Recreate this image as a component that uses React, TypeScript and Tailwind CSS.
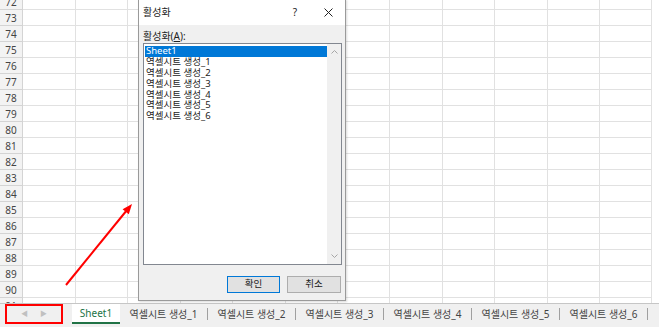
import React from 'react';

const FONT = '"Noto Sans", "Noto Sans CJK KR", sans-serif';

const rows = Array.from({length: 20}, (_, i) => 72 + i);
const cols = Array.from({length: 12}, (_, i) => i);
const sheets = ['역셀시트 생성_1', '역셀시트 생성_2', '역셀시트 생성_3', '역셀시트 생성_4', '역셀시트 생성_5', '역셀시트 생성_6'];
const items = ['Sheet1', ...sheets];

function Grid() {
  return (
    <div className="h-[303px] overflow-hidden bg-white">
      <div className="-mt-[6px]">
        {rows.map(r => (
          <div key={r} className="flex h-[16px]">
            <div className="flex w-[23px] shrink-0 items-center justify-center border-r border-b border-[#d4d4d4] bg-[#f3f3f3] text-[10px] leading-none text-[#444]">
              {r}
            </div>
            {cols.map(c => (
              <div key={c} className={`${c === 0 ? 'w-[53px]' : 'w-[52.4px]'} shrink-0 border-r border-b border-[#e1e1e1]`} />
            ))}
          </div>
        ))}
      </div>
    </div>
  );
}

function Dialog() {
  return (
    <div className="absolute left-[138px] top-[-1px] flex h-[302px] w-[208px] flex-col border border-[#9a9a9a] bg-[#f0f0f0] shadow-[1px_1px_2px_rgba(0,0,0,0.15)]">
      <div className="flex h-[25px] items-center bg-white pl-[4px] text-[10px] text-[#222]">
        <span>활성화</span>
        <span className="ml-auto mr-[27px] text-[10px]">?</span>
        <svg width="9" height="9" viewBox="0 0 9 9" className="mr-[12px]">
          <path d="M0.5 0.5 L8.5 8.5 M8.5 0.5 L0.5 8.5" stroke="#222" strokeWidth="1" />
        </svg>
      </div>
      <div className="flex flex-1 flex-col px-[4px]">
        <div className="mt-[5px] h-[12px] text-[10px] leading-[12px] text-[#222]">
          활성화(<span className="underline">A</span>):
        </div>
        <div className="mt-[1px] flex h-[222px] w-[199px] border border-[#828790] bg-white">
          <div className="flex-1 pl-[1px] pt-[2px]">
            {items.map((it, i) => (
              <div key={it}
                className={`h-[10.9px] pl-[1px] text-[9.5px] leading-[10.9px] ${i === 0 ? 'bg-[#0078d7] text-white' : 'text-[#222]'}`}>
                {it}
              </div>
            ))}
          </div>
          <div className="flex w-[14px] flex-col items-center justify-between bg-[#f0f0f0] py-[6px]">
            <svg width="7" height="4" viewBox="0 0 7 4"><path d="M0.5 3.5 L3.5 0.5 L6.5 3.5" fill="none" stroke="#a6a6a6" /></svg>
            <svg width="7" height="4" viewBox="0 0 7 4"><path d="M0.5 0.5 L3.5 3.5 L6.5 0.5" fill="none" stroke="#a6a6a6" /></svg>
          </div>
        </div>
        <div className="mt-[11px] flex justify-end gap-[7px]">
          <button className="flex h-[17px] w-[53px] items-center justify-center border border-[#0078d7] bg-[#e1e1e1] text-[9.5px] text-[#222]">확인</button>
          <button className="flex h-[17px] w-[54px] items-center justify-center border border-[#adadad] bg-[#e1e1e1] text-[9.5px] text-[#222]">취소</button>
        </div>
      </div>
    </div>
  );
}

function TabBar() {
  return (
    <div className="flex h-[24px] border-t border-[#c6c6c6] bg-[#f0f0f0] pl-[5px]">
      <div className="flex h-[20px] w-[58px] items-center justify-center gap-[12px] border-2 border-[#ff0000] text-[7px] text-[#c0c0c0]">
        <span>◀</span><span>▶</span>
      </div>
      <div className="ml-[9px] flex h-[20px] w-[48px] items-center justify-center border-b-2 border-[#217346] bg-white text-[10px] text-[#217346]">
        Sheet1
      </div>
      {sheets.map(s => (
        <div key={s} className="flex h-[20px] w-[88px] items-center">
          <span className="flex-1 text-center text-[10px] text-[#444]">{s}</span>
          <span className="h-[12px] w-px bg-[#a0a0a0]" />
        </div>
      ))}
    </div>
  );
}

export default function App() {
  return (
    <div className="relative h-[327px] w-[659px] overflow-hidden bg-white" style={{fontFamily: FONT}}>
      <Grid />
      <TabBar />
      <Dialog />
      <svg className="pointer-events-none absolute left-0 top-0" width="659" height="327">
        <line x1="66" y1="285" x2="127" y2="210" stroke="#ff0000" strokeWidth="2" />
        <polygon points="132,204 128.8,214.3 122.6,209.2" fill="#ff0000" />
      </svg>
    </div>
  );
}
